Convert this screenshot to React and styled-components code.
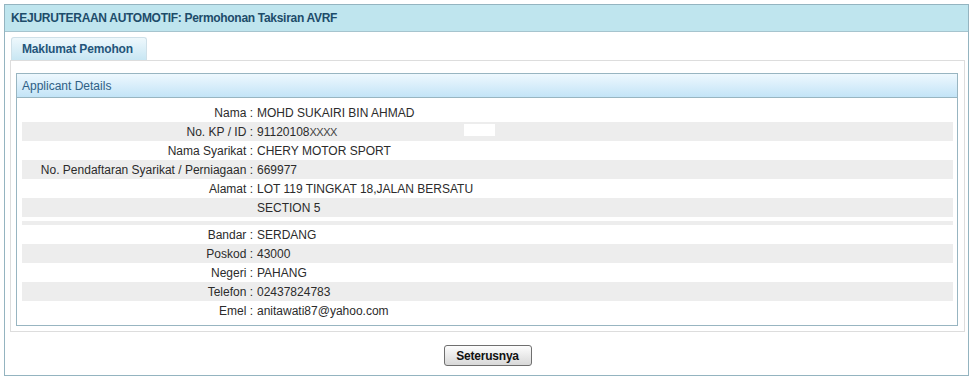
import React from 'react';
import styled, { createGlobalStyle } from 'styled-components';

const GlobalStyle = createGlobalStyle`
  body {
    margin: 0;
    background: #ffffff;
    font-family: "Liberation Sans", Arial, sans-serif;
    font-size: 12px;
    color: #333333;
  }
`;

const details = [
  { label: 'Nama :', value: 'MOHD SUKAIRI BIN AHMAD' },
  { label: 'No. KP / ID :', value: '91120108', masked: 'XXXX' },
  { label: 'Nama Syarikat :', value: 'CHERY MOTOR SPORT' },
  { label: 'No. Pendaftaran Syarikat / Perniagaan :', value: '669977' },
  { label: 'Alamat :', value: 'LOT 119 TINGKAT 18,JALAN BERSATU' },
  { label: '', value: 'SECTION 5' },
  { spacer: true },
  { label: 'Bandar :', value: 'SERDANG' },
  { label: 'Poskod :', value: '43000' },
  { label: 'Negeri :', value: 'PAHANG' },
  { label: 'Telefon :', value: '02437824783' },
  { label: 'Emel :', value: 'anitawati87@yahoo.com' },
];

const App = () => {
  let stripe = 0;
  return (
    <>
      <GlobalStyle />
      <Frame>
        <TitleBar>KEJURUTERAAN AUTOMOTIF: Permohonan Taksiran AVRF</TitleBar>
        <FrameBody>
          <TabStrip>
            <Tab>Maklumat Pemohon</Tab>
          </TabStrip>
          <TabPanel>
            <Fieldset>
              <Legend>Applicant Details</Legend>
              <Rows>
                {details.map((row, i) => {
                  if (row.spacer) {
                    return (
                      <React.Fragment key={i}>
                        <Spacer />
                        <Spacer $shaded />
                      </React.Fragment>
                    );
                  }
                  const shaded = stripe % 2 === 1;
                  stripe += 1;
                  return (
                    <Row key={i} $shaded={shaded}>
                      <Label>{row.label}</Label>
                      <Value>
                        {row.value}
                        {row.masked && <Masked>{row.masked}</Masked>}
                        {row.masked && <Redact />}
                      </Value>
                    </Row>
                  );
                })}
              </Rows>
            </Fieldset>
          </TabPanel>
          <Actions>
            <Button type="button">Seterusnya</Button>
          </Actions>
        </FrameBody>
      </Frame>
    </>
  );
};

export default App;

const Frame = styled.div`
  box-sizing: border-box;
  margin: 4px 0 0 4px;
  width: 965px;
  height: 372px;
  border: 1px solid #94b4c0;
  display: flex;
  flex-direction: column;
`;

const TitleBar = styled.div`
  height: 26px;
  line-height: 27px;
  padding-left: 6px;
  background: #bfe5ee;
  border-bottom: 1px solid #a6c4ce;
  color: #1d4c6a;
  font-weight: bold;
  font-size: 12px;
  letter-spacing: -0.3px;
`;

const FrameBody = styled.div`
  flex: 1;
  padding: 5px 3px 0 5px;
  display: flex;
  flex-direction: column;
`;

const TabStrip = styled.div`
  display: flex;
  padding-left: 1px;
`;

const Tab = styled.div`
  box-sizing: border-box;
  width: 136px;
  height: 23px;
  line-height: 22px;
  padding-left: 10px;
  border: 1px solid #cfe0e8;
  border-bottom: none;
  border-radius: 3px 3px 0 0;
  background: linear-gradient(#eef8fc, #c8e6f3);
  color: #24557a;
  font-weight: bold;
  font-size: 12px;
  letter-spacing: -0.15px;
`;

const TabPanel = styled.div`
  box-sizing: border-box;
  border: 1px solid #dddddd;
  padding: 12px 6px 5px 5px;
`;

const Fieldset = styled.div`
  border: 1px solid #98b5c1;
`;

const Legend = styled.div`
  height: 23px;
  line-height: 24px;
  padding-left: 5px;
  background: linear-gradient(#eef8fe, #c3e4f7);
  border-bottom: 1px solid #98b5c1;
  color: #2f5f85;
  font-size: 12px;
`;

const Rows = styled.div`
  padding: 5px 4px 5px 5px;
`;

const Row = styled.div`
  display: grid;
  grid-template-columns: 231px 1fr;
  column-gap: 4px;
  height: 19px;
  line-height: 20px;
  background: ${(p) => (p.$shaded ? '#ededed' : 'transparent')};
  color: #2b2b2b;
`;

const Spacer = styled.div`
  height: 4px;
  background: ${(p) => (p.$shaded ? '#ededed' : 'transparent')};
`;

const Label = styled.div`
  text-align: right;
  white-space: nowrap;
`;

const Value = styled.div`
  position: relative;
  white-space: nowrap;
`;

const Masked = styled.span`
  font-size: 11px;
  letter-spacing: -0.5px;
  color: #444444;
`;

const Redact = styled.span`
  position: absolute;
  left: 207px;
  top: 2px;
  width: 31px;
  height: 12px;
  background: #ffffff;
`;

const Actions = styled.div`
  display: flex;
  justify-content: center;
  padding-top: 13px;
`;

const Button = styled.button`
  box-sizing: border-box;
  width: 88px;
  height: 21px;
  padding: 0;
  border: 1px solid #6f6f6f;
  border-radius: 3px;
  background: linear-gradient(#fdfdfd, #d8d8d8);
  font-family: "Liberation Sans", Arial, sans-serif;
  font-size: 12px;
  font-weight: bold;
  color: #111111;
  letter-spacing: -0.2px;
`;
